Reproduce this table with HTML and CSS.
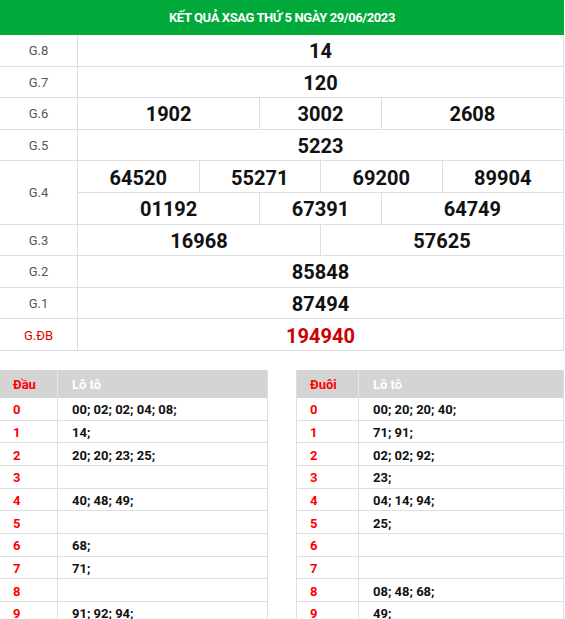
FILE: index.html
```html
<!DOCTYPE html>
<html lang="vi">
<head>
<meta charset="utf-8">
<link rel="stylesheet" href="styles.css">
</head>
<body>
<div class="page">
  <div class="result">
    <div class="title">KẾT QUẢ XSAG THỨ 5 NGÀY 29/06/2023</div>
    <div class="grid">
      <div class="lbl">G.8</div><div class="num s8">14</div>
      <div class="lbl">G.7</div><div class="num s8">120</div>
      <div class="lbl">G.6</div><div class="num s3">1902</div><div class="num s2">3002</div><div class="num s3">2608</div>
      <div class="lbl">G.5</div><div class="num s8">5223</div>
      <div class="lbl r2">G.4</div><div class="num s2">64520</div><div class="num s2">55271</div><div class="num s2">69200</div><div class="num s2">89904</div>
      <div class="num s3">01192</div><div class="num s2">67391</div><div class="num s3">64749</div>
      <div class="lbl">G.3</div><div class="num s4">16968</div><div class="num s4">57625</div>
      <div class="lbl">G.2</div><div class="num s8">85848</div>
      <div class="lbl">G.1</div><div class="num s8">87494</div>
      <div class="lbl red">G.ĐB</div><div class="num s8 red">194940</div>
    </div>
  </div>

  <div class="loto">
    <div class="lt left">
      <div class="lh"><div class="c1 red">Đầu</div><div class="c2">Lô tô</div></div>
      <div class="lr"><div class="c1">0</div><div class="c2">00; 02; 02; 04; 08;</div></div>
      <div class="lr"><div class="c1">1</div><div class="c2">14;</div></div>
      <div class="lr"><div class="c1">2</div><div class="c2">20; 20; 23; 25;</div></div>
      <div class="lr"><div class="c1">3</div><div class="c2"></div></div>
      <div class="lr"><div class="c1">4</div><div class="c2">40; 48; 49;</div></div>
      <div class="lr"><div class="c1">5</div><div class="c2"></div></div>
      <div class="lr"><div class="c1">6</div><div class="c2">68;</div></div>
      <div class="lr"><div class="c1">7</div><div class="c2">71;</div></div>
      <div class="lr"><div class="c1">8</div><div class="c2"></div></div>
      <div class="lr"><div class="c1">9</div><div class="c2">91; 92; 94;</div></div>
    </div>
    <div class="lt right">
      <div class="lh"><div class="c1 red">Đuôi</div><div class="c2">Lô tô</div></div>
      <div class="lr"><div class="c1">0</div><div class="c2">00; 20; 20; 40;</div></div>
      <div class="lr"><div class="c1">1</div><div class="c2">71; 91;</div></div>
      <div class="lr"><div class="c1">2</div><div class="c2">02; 02; 92;</div></div>
      <div class="lr"><div class="c1">3</div><div class="c2">23;</div></div>
      <div class="lr"><div class="c1">4</div><div class="c2">04; 14; 94;</div></div>
      <div class="lr"><div class="c1">5</div><div class="c2">25;</div></div>
      <div class="lr"><div class="c1">6</div><div class="c2"></div></div>
      <div class="lr"><div class="c1">7</div><div class="c2"></div></div>
      <div class="lr"><div class="c1">8</div><div class="c2">08; 48; 68;</div></div>
      <div class="lr"><div class="c1">9</div><div class="c2">49;</div></div>
    </div>
  </div>
</div>
</body>
</html>
```

FILE: styles.css
```css
html, body {
  margin: 0;
  padding: 0;
  background: #fff;
}
body {
  font-family: Roboto, "Liberation Sans", Arial, sans-serif;
  color: #111;
  overflow: hidden;
}
.page {
  width: 565px;
  overflow: hidden;
}
.result {
  width: 564px;
}
.title {
  height: 35px;
  background: #01a93b;
  color: #fff;
  font-weight: 700;
  font-size: 13px;
  letter-spacing: -0.4px;
  display: flex;
  align-items: center;
  justify-content: center;
}
.grid {
  display: grid;
  grid-template-columns: 78px repeat(8, 1fr);
  grid-auto-rows: 31.6px;
}
.grid > div {
  border-right: 1px solid #dedede;
  border-bottom: 1px solid #dedede;
  display: flex;
  align-items: center;
  justify-content: center;
}
.lbl {
  font-size: 13px;
  color: #555;
  padding-top: 1px;
}
.r2 { grid-row: span 2; }
.num {
  font-size: 20px;
  font-weight: 700;
  color: #111;
  padding-top: 2px;
}
.s8 { grid-column: span 8; }
.s4 { grid-column: span 4; }
.s3 { grid-column: span 3; }
.s2 { grid-column: span 2; }
.red { color: #e00000; }
.num.red { color: #cc0000; }
.lbl.red { color: #e00000; }

.loto {
  display: flex;
  gap: 28px;
  margin-top: 19px;
}
.lt {
  width: 268px;
  border-right: 1px solid #dedede;
  box-sizing: border-box;
}
.lt.right {
  border-left: 1px solid #dedede;
}
.lh, .lr {
  display: grid;
  grid-template-columns: 58px 1fr;
}
.lt.right .lh, .lt.right .lr {
  grid-template-columns: 62px 1fr;
}
.lh {
  height: 28px;
  background: #d4d4d4;
  font-size: 13px;
  font-weight: 700;
}
.lh > div {
  display: flex;
  align-items: center;
  padding-top: 1px;
}
.lh .c1 {
  border-right: 1px solid #e6e6e6;
  padding-left: 13px;
  color: #ff0000;
}
.lh .c2 {
  color: #fff;
  padding-left: 14px;
}
.lr {
  height: 22.7px;
  box-sizing: border-box;
  border-bottom: 1px solid #dedede;
  font-size: 13px;
  font-weight: 700;
}
.lr > div {
  display: flex;
  align-items: center;
  padding-top: 2px;
}
.lr .c1 {
  color: #ff0000;
  padding-left: 13px;
  border-right: 1px solid #dedede;
}
.lr .c2 {
  color: #111;
  padding-left: 14px;
}
```
